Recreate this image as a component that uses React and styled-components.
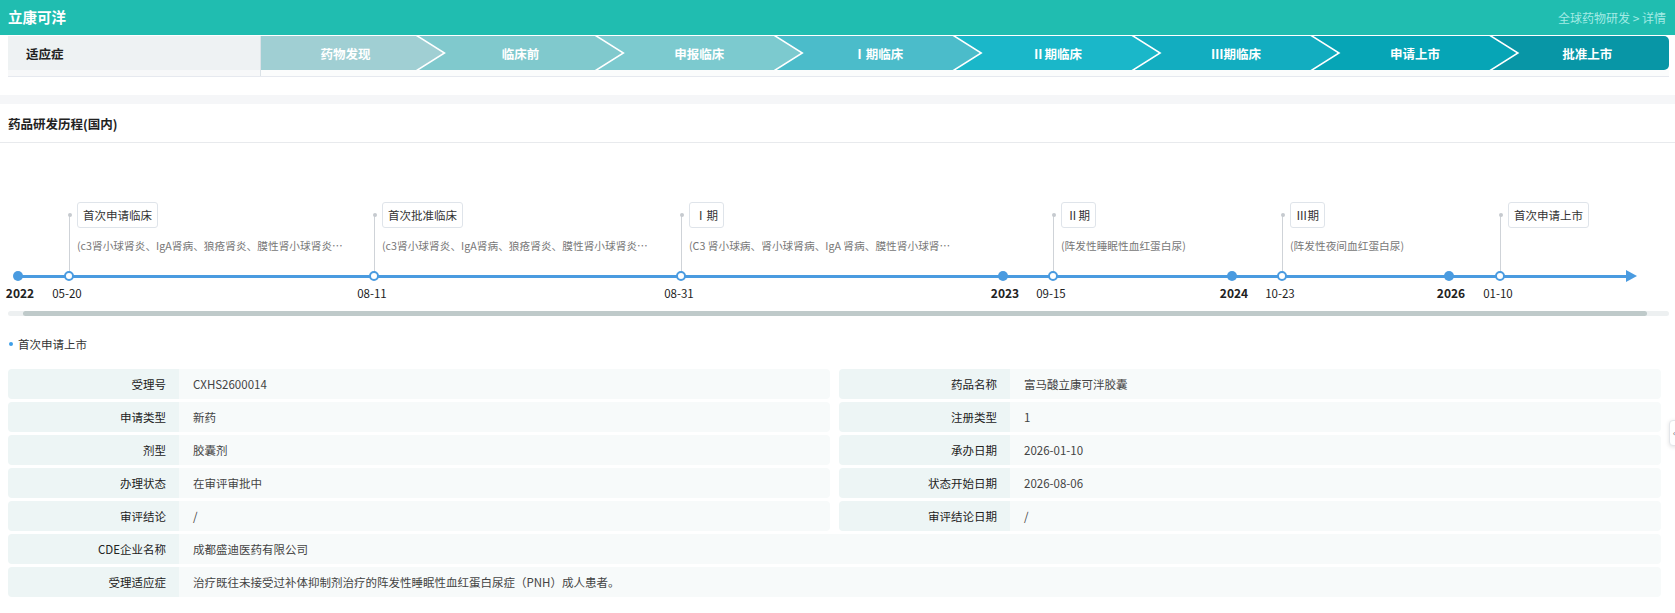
import React from 'react';
import styled, { createGlobalStyle } from 'styled-components';

const GlobalStyle = createGlobalStyle`
  html, body { margin: 0; padding: 0; background: #fff; }
  body { font-family: "Noto Sans CJK SC", "Noto Sans", sans-serif; color: #333; }
  * { box-sizing: border-box; }
`;

const Page = styled.div`
  position: relative;
  width: 100%;
  height: 613px;
  overflow: hidden;
  background: #fff;
`;

const Header = styled.header`
  height: 35px;
  background: #20bdb0;
  display: flex;
  align-items: center;
  justify-content: space-between;
  padding: 0 9px 0 8px;
`;

const Title = styled.h1`
  margin: 0;
  font-size: 14.5px;
  font-weight: 700;
  color: #fff;
  line-height: 1;
`;

const Crumb = styled.div`
  font-size: 12px;
  color: #a3ebe5;
`;

const StageSection = styled.section`
  padding: 1px 6px 18px 8px;
`;

const StageTable = styled.div`
  border-bottom: 1px solid #e6e9ef;
`;

const StageRow = styled.div`
  display: flex;
  height: ${p => p.$h}px;
  background: ${p => p.$bg || 'transparent'};
`;

const IndicationCell = styled.div`
  flex: none;
  width: 253px;
  background: ${p => (p.$head ? '#eef2f3' : '#f7f8f9')};
  border-right: 1px solid #dbe2e7;
  display: flex;
  align-items: center;
  padding-left: 18px;
  font-size: 12.5px;
  font-weight: 700;
  color: #222;
`;

const StageBar = styled.div`
  flex: 1;
  display: flex;
  min-width: 0;
`;

const shapes = {
  first: 'polygon(0 0, calc(100% - 27px) 0, 100% 50%, calc(100% - 27px) 100%, 0 100%)',
  middle: 'polygon(0 0, calc(100% - 27px) 0, 100% 50%, calc(100% - 27px) 100%, 0 100%, 27px 50%)',
  last: 'polygon(0 0, 100% 0, 100% 100%, 0 100%, 27px 50%)',
};

const Stage = styled.div`
  flex: ${p => p.$grow} 0 0;
  margin-right: ${p => (p.$kind === 'last' ? 0 : -24)}px;
  background: ${p => p.$color};
  clip-path: ${p => shapes[p.$kind]};
  border-radius: ${p => (p.$kind === 'last' ? '0 5px 5px 0' : 0)};
  display: flex;
  align-items: center;
  justify-content: center;
  padding: ${p => (p.$kind === 'first' ? '0 13px 0 0' : p.$kind === 'last' ? '0 0 0 13px' : '0 13px')};
  color: #fff;
  font-size: 12.5px;
  font-weight: 700;
  white-space: nowrap;
`;

const GapBand = styled.div`
  height: 9px;
  background: #f5f6f8;
`;

const SectionHead = styled.div`
  height: 39px;
  display: flex;
  align-items: center;
  padding-left: 8px;
  border-bottom: 1px solid #e8eaed;
  font-size: 12.5px;
  font-weight: 700;
  color: #222;
`;

const TimelineWrap = styled.div`
  padding: 0 6px 0 8px;
`;

const Canvas = styled.div`
  position: relative;
  height: 168px;
`;

const Axis = styled.div`
  position: absolute;
  left: 10px;
  right: 40px;
  top: 131.5px;
  height: 3px;
  background: #4a9be0;
`;

const ArrowHead = styled.div`
  position: absolute;
  left: 1618px;
  top: 127px;
  width: 0;
  height: 0;
  border-top: 6px solid transparent;
  border-bottom: 6px solid transparent;
  border-left: 11px solid #4a9be0;
`;

const Dot = styled.div`
  position: absolute;
  top: 128px;
  width: 10px;
  height: 10px;
  margin-left: -5px;
  border-radius: 50%;
  background: ${p => (p.$hollow ? '#fff' : '#4a9be0')};
  border: ${p => (p.$hollow ? '2px solid #4a9be0' : 'none')};
  z-index: 2;
`;

const Tick = styled.div`
  position: absolute;
  top: 142px;
  transform: translateX(-50%);
  font-size: ${p => (p.$year ? 12 : 11.5)}px;
  font-weight: ${p => (p.$year ? 700 : 400)};
  line-height: 16px;
  color: #222;
  white-space: nowrap;
`;

const Connector = styled.div`
  position: absolute;
  top: 72px;
  width: 1px;
  height: 60px;
  background: #cfd3d8;
  &::before {
    content: '';
    position: absolute;
    left: -1.5px;
    top: -2px;
    width: 4px;
    height: 4px;
    border-radius: 50%;
    background: #c6cacf;
  }
`;

const EventBox = styled.div`
  position: absolute;
  top: 59px;
  height: 26px;
  padding: 0 5px;
  display: flex;
  align-items: center;
  border: 1px solid #dfe4ea;
  border-radius: 3px;
  background: #fff;
  font-size: 11.5px;
  color: #333;
  white-space: nowrap;
`;

const EventDesc = styled.div`
  position: absolute;
  top: 95px;
  max-width: 270px;
  line-height: 16px;
  font-size: 10.7px;
  color: #777;
  white-space: nowrap;
  overflow: hidden;
  text-overflow: ellipsis;
`;

const ScrollTrack = styled.div`
  height: 5px;
  border-radius: 3px;
  background: #edf0f1;
  padding: 0 22px 0 15px;
`;

const ScrollThumb = styled.div`
  height: 100%;
  border-radius: 3px;
  background: #bfcaca;
`;

const DetailSection = styled.section`
  padding: 20px 14px 0 8px;
`;

const BulletTitle = styled.div`
  position: relative;
  height: 16px;
  line-height: 16px;
  padding-left: 10px;
  font-size: 11.5px;
  color: #333;
  &::before {
    content: '';
    position: absolute;
    left: 1px;
    top: 6px;
    width: 4px;
    height: 4px;
    border-radius: 50%;
    background: #3e9fe8;
  }
`;

const InfoGrid = styled.div`
  margin-top: 17px;
  display: grid;
  grid-template-columns: 1fr 1fr;
  column-gap: 9px;
  row-gap: 3px;
`;

const InfoCell = styled.div`
  grid-column: ${p => (p.$full ? '1 / -1' : 'auto')};
  display: flex;
  height: 30px;
  border-radius: 4px;
  overflow: hidden;
  font-size: 11.5px;
  line-height: 30px;
`;

const InfoLabel = styled.div`
  flex: none;
  width: 171px;
  padding-right: 13px;
  text-align: right;
  background: #edf5f5;
  color: #222;
`;

const InfoValue = styled.div`
  flex: 1;
  padding-left: 14px;
  background: #f7fafa;
  color: #444;
  white-space: nowrap;
`;

const SideTab = styled.div`
  position: absolute;
  right: -8px;
  top: 420px;
  width: 14px;
  height: 26px;
  background: #fff;
  border: 1px solid #e3e6ea;
  border-radius: 4px;
  box-shadow: 0 1px 4px rgba(0, 0, 0, 0.12);
  display: flex;
  align-items: center;
  padding-left: 3px;
  font-size: 8px;
  color: #555;
  line-height: 1;
`;

const stages = [
  { name: '药物发现', color: '#a0cfd3', kind: 'first', grow: 191 },
  { name: '临床前', color: '#80c9cd', kind: 'middle', grow: 200 },
  { name: '申报临床', color: '#7ccacf', kind: 'middle', grow: 200 },
  { name: 'Ⅰ期临床', color: '#4bbcca', kind: 'middle', grow: 200 },
  { name: 'Ⅱ期临床', color: '#1ab7c9', kind: 'middle', grow: 200 },
  { name: 'Ⅲ期临床', color: '#12adc0', kind: 'middle', grow: 200 },
  { name: '申请上市', color: '#06a5b6', kind: 'middle', grow: 200 },
  { name: '批准上市', color: '#0896a6', kind: 'last', grow: 185 },
];

const descA = '(c3肾小球肾炎、IgA肾病、狼疮肾炎、膜性肾小球肾炎、原发性膜性肾病)';
const descB = '(C3 肾小球病、肾小球肾病、IgA 肾病、膜性肾小球肾病、狼疮性肾炎)';

const points = [
  { x: 10, year: '2022' },
  { x: 61, date: '05-20', title: '首次申请临床', desc: descA },
  { x: 366, date: '08-11', title: '首次批准临床', desc: descA },
  { x: 673, date: '08-31', title: 'Ⅰ期', desc: descB },
  { x: 995, year: '2023' },
  { x: 1045, date: '09-15', title: 'Ⅱ期', desc: '(阵发性睡眠性血红蛋白尿)' },
  { x: 1224, year: '2024' },
  { x: 1274, date: '10-23', title: 'Ⅲ期', desc: '(阵发性夜间血红蛋白尿)' },
  { x: 1441, year: '2026' },
  { x: 1492, date: '01-10', title: '首次申请上市' },
];

const pairs = [
  ['受理号', 'CXHS2600014', '药品名称', '富马酸立康可泮胶囊'],
  ['申请类型', '新药', '注册类型', '1'],
  ['剂型', '胶囊剂', '承办日期', '2026-01-10'],
  ['办理状态', '在审评审批中', '状态开始日期', '2026-08-06'],
  ['审评结论', '/', '审评结论日期', '/'],
];

const fullRows = [
  ['CDE企业名称', '成都盛迪医药有限公司'],
  ['受理适应症', '治疗既往未接受过补体抑制剂治疗的阵发性睡眠性血红蛋白尿症（PNH）成人患者。'],
];

function TimelinePoint({ p }) {
  if (p.year) {
    return (
      <>
        <Dot style={{ left: p.x }} />
        <Tick $year style={{ left: p.x + 2 }}>{p.year}</Tick>
      </>
    );
  }
  return (
    <>
      <Connector style={{ left: p.x }} />
      <EventBox style={{ left: p.x + 8 }}>{p.title}</EventBox>
      {p.desc && <EventDesc style={{ left: p.x + 8 }}>{p.desc}</EventDesc>}
      <Dot $hollow style={{ left: p.x }} />
      <Tick style={{ left: p.x - 2 }}>{p.date}</Tick>
    </>
  );
}

export default function App() {
  return (
    <Page>
      <GlobalStyle />
      <Header>
        <Title>立康可洋</Title>
        <Crumb>全球药物研发 &gt; 详情</Crumb>
      </Header>

      <StageSection>
        <StageTable>
          <StageRow $h={34}>
            <IndicationCell $head>适应症</IndicationCell>
            <StageBar>
              {stages.map(s => (
                <Stage key={s.name} $color={s.color} $kind={s.kind} $grow={s.grow}>
                  {s.name}
                </Stage>
              ))}
            </StageBar>
          </StageRow>
          <StageRow $h={6} $bg="#fbfcfc">
            <IndicationCell />
          </StageRow>
        </StageTable>
      </StageSection>

      <GapBand />
      <SectionHead>药品研发历程(国内)</SectionHead>

      <TimelineWrap>
        <Canvas>
          <Axis />
          <ArrowHead />
          {points.map((p, i) => (
            <TimelinePoint key={i} p={p} />
          ))}
        </Canvas>
        <ScrollTrack>
          <ScrollThumb />
        </ScrollTrack>
      </TimelineWrap>

      <DetailSection>
        <BulletTitle>首次申请上市</BulletTitle>
        <InfoGrid>
          {pairs.map(([l1, v1, l2, v2]) => (
            <React.Fragment key={l1}>
              <InfoCell>
                <InfoLabel>{l1}</InfoLabel>
                <InfoValue>{v1}</InfoValue>
              </InfoCell>
              <InfoCell>
                <InfoLabel>{l2}</InfoLabel>
                <InfoValue>{v2}</InfoValue>
              </InfoCell>
            </React.Fragment>
          ))}
          {fullRows.map(([l, v]) => (
            <InfoCell $full key={l}>
              <InfoLabel>{l}</InfoLabel>
              <InfoValue>{v}</InfoValue>
            </InfoCell>
          ))}
        </InfoGrid>
      </DetailSection>

      <SideTab>‹</SideTab>
    </Page>
  );
}
